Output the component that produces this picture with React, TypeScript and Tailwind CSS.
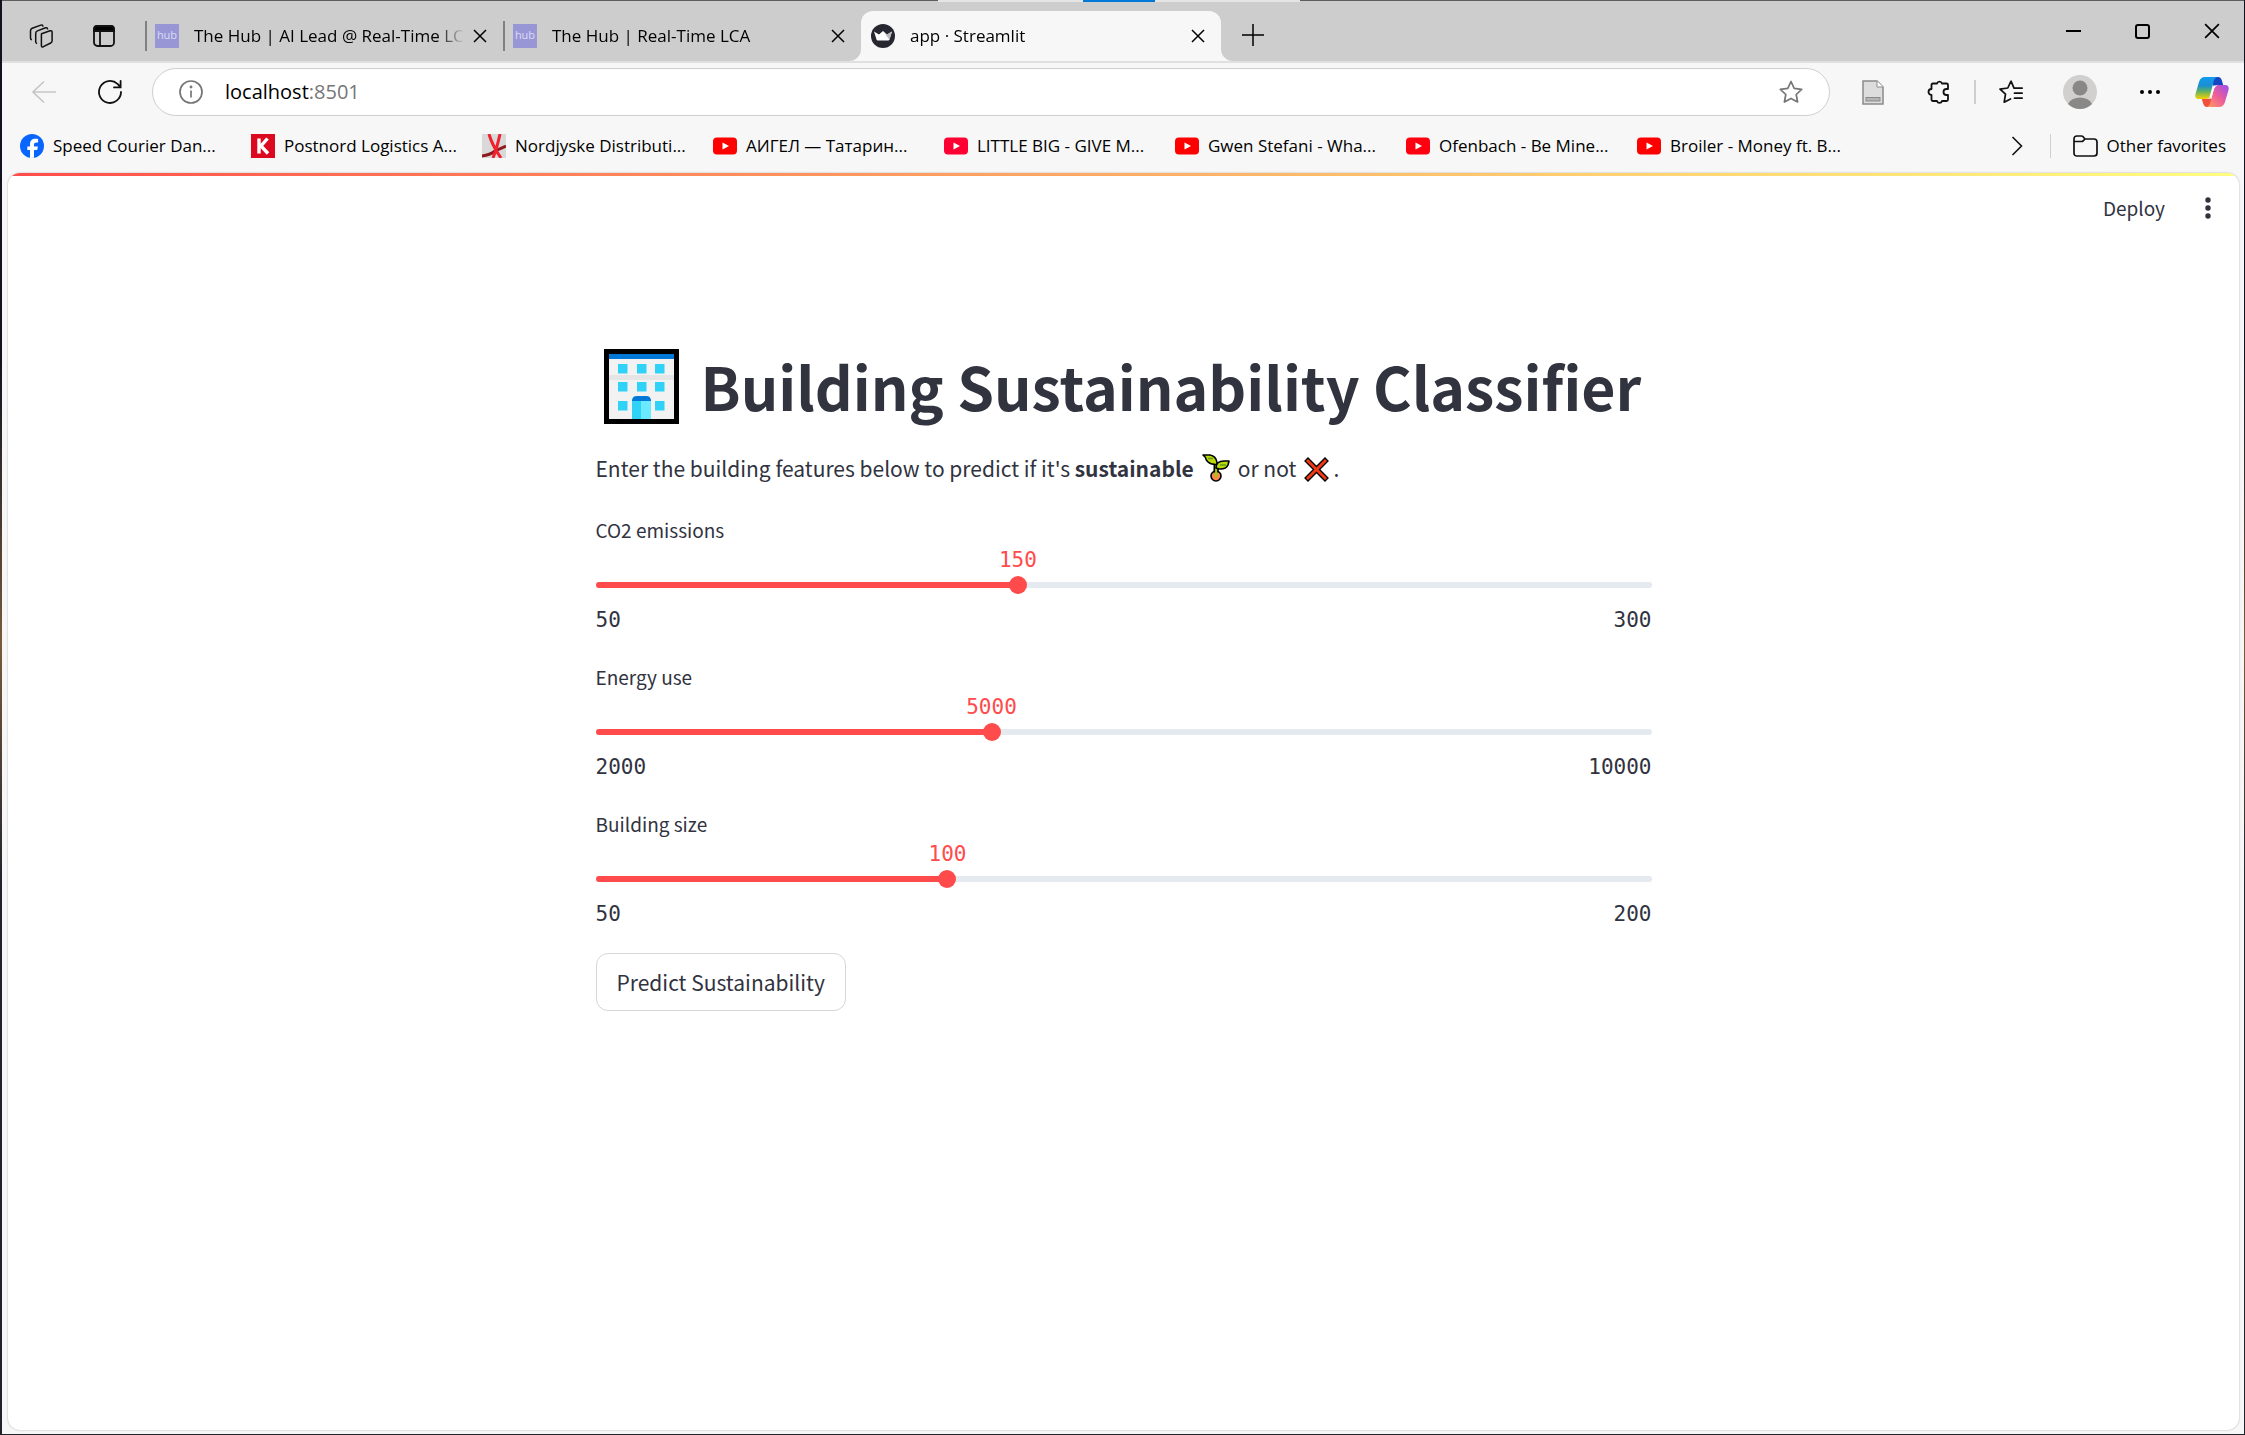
import React, { useState } from "react";

const ui = "font-['Open_Sans','Noto_Sans',sans-serif]";
const page = "font-['Noto_Sans_CJK_SC','Noto_Sans',sans-serif]";

function CloseIcon({ size = 14 }: { size?: number }) {
  return (
    <svg width={size} height={size} viewBox="0 0 14 14" stroke="#000" strokeWidth="1.5" fill="none">
      <path d="M1 1l12 12M13 1L1 13" />
    </svg>
  );
}

function HubIcon() {
  return (
    <span className="flex size-6 shrink-0 items-center justify-center bg-[#9996d6] pb-1 text-[11px] leading-none text-[#dcdbf5]">hub</span>
  );
}

function StreamlitIcon() {
  return (
    <svg className="shrink-0" width="24" height="24" viewBox="0 0 24 24">
      <circle cx="12" cy="12" r="12" fill="#262730" />
      <path d="M3 7.5l5 3 4-3.5 4 3.5 5-3-2.6 8.2q-.3.8-1.2.8H6.8q-.9 0-1.2-.8z" fill="#fff" />
      <path d="M12 7l4 3.5 5-3-2.6 8.2z" fill="#b9b9be" />
    </svg>
  );
}

function Tab({ title, icon, active = false }: { title: string; icon: React.ReactNode; active?: boolean }) {
  return (
    <div className={active ? "relative flex h-full w-[360px] items-center rounded-t-xl bg-[#f7f7f7] pr-[13px] pl-2.5" : "relative flex h-full w-[358px] items-center pr-[13px] pl-2.5"}>
      {active ? (
        <>
          <svg className="absolute bottom-0 -left-3" width="12" height="12" viewBox="0 0 12 12"><path d="M12 0v12H0A12 12 0 0 0 12 0z" fill="#f7f7f7" /></svg>
          <svg className="absolute -right-3 bottom-0" width="12" height="12" viewBox="0 0 12 12"><path d="M0 0v12h12A12 12 0 0 1 0 0z" fill="#f7f7f7" /></svg>
        </>
      ) : (
        <span className="absolute left-0 h-[30px] w-0.5 bg-[#808080]" />
      )}
      {icon}
      <span className="ml-[15px] flex-1 overflow-hidden text-[17px] leading-6 whitespace-nowrap [mask-image:linear-gradient(to_right,#000_90%,transparent)]">{title}</span>
      <button aria-label={"Close " + title} className="ml-1.5 flex h-6 w-5 items-center justify-center"><CloseIcon /></button>
    </div>
  );
}

function YouTube({ color }: { color: string }) {
  return (
    <svg className="shrink-0" width="24" height="24" viewBox="0 0 24 24">
      <rect y="3.5" width="24" height="17" rx="4" fill={color} />
      <path d="M9.5 8.5v7l6.500-3.500z" fill="#fff" />
    </svg>
  );
}

const facebook = (
  <svg className="shrink-0" width="24" height="24" viewBox="0 0 24 24">
    <circle cx="12" cy="12" r="12" fill="#0866ff" />
    <path d="M10 24v-8H7.300v-3.600H10v-1.800c0-4 1.800-5.800 5.600-5.800.8 0 1.900.1 2.500.3v3.300h-1.500c-1.900 0-2.600.7-2.600 2.500v1.500h3.900l-.7 3.600H14v7.800z" fill="#fff" />
  </svg>
);
const krak = (
  <svg className="shrink-0" width="24" height="24" viewBox="0 0 24 24">
    <rect width="24" height="24" fill="#dc0a20" />
    <path d="M8 4.500v15M16.500 4.500L10 12l7 7.500" stroke="#fff" strokeWidth="3.400" fill="none" />
  </svg>
);
const nord = (
  <svg className="shrink-0" width="24" height="24" viewBox="0 0 24 24">
    <rect width="24" height="24" fill="#d9d9d9" />
    <path d="M0 22q8-1 13-5l11-5" stroke="#8e1a20" strokeWidth="3" fill="none" />
    <path d="M7 0q3 11 12 24M18 0q-3 14-7 24" stroke="#f0202c" strokeWidth="3" fill="none" />
  </svg>
);

const bookmarks: [string, React.ReactNode][] = [
  ["Speed Courier Dan...", facebook],
  ["Postnord Logistics A...", krak],
  ["Nordjyske Distributi...", nord],
  ["АИГЕЛ — Татарин...", <YouTube color="#ff0000" />],
  ["LITTLE BIG - GIVE M...", <YouTube color="#ff0033" />],
  ["Gwen Stefani - Wha...", <YouTube color="#ff0000" />],
  ["Ofenbach - Be Mine...", <YouTube color="#ff0010" />],
  ["Broiler - Money ft. B...", <YouTube color="#ff0000" />],
];

function TitleBar() {
  return (
    <header className="relative flex h-[61px] items-stretch border-t border-[#5f5d5d] bg-[#cdcdcd]">
      <div className="absolute -top-px left-[936px] flex h-0.5 w-[362px] justify-center bg-[#e5e5e5]"><span className="w-[72px] bg-[#0078d7]" /></div>
      <div className="flex w-[143px] items-center gap-10 pt-2.5 pl-[27px]">
        <button aria-label="Workspaces">
          <svg width="24" height="24" viewBox="0 0 24 24" fill="none" stroke="#111" strokeWidth="1.5" strokeLinejoin="round">
            <path d="M12.500 9.800l8.600-3q2-.6 2 1.400v8.600q0 1.600-1.400 2.200l-7.300 3.700q-2 .9-2-1.200V12q0-1.700.1-2.200z" />
            <path d="M18.500 5.600V5q0-1.800-1.900-1.200L8.400 6.900Q6.700 7.600 6.700 9.300v8.500q0 1.400 1.400 1.800M14 2.600q-.2-2.200-2.200-1.500L3.200 4.300Q1.500 5 1.500 6.700v7.500q0 1.300 1.400 1.700" />
          </svg>
        </button>
        <button aria-label="Tab actions">
          <svg width="22" height="22" viewBox="0 0 22 22" fill="none" stroke="#111" strokeWidth="1.8">
            <rect x="1" y="1" width="20" height="20" rx="3.5" />
            <path d="M1 6V4q0-3 3-3h14q3 0 3 3v2z" fill="#000" />
            <path d="M7 7v14" />
          </svg>
        </button>
      </div>
      <nav className="flex pt-2.5">
        <Tab title="The Hub | AI Lead @ Real-Time LCA" icon={<HubIcon />} />
        <Tab title="The Hub | Real-Time LCA" icon={<HubIcon />} />
        <Tab title="app · Streamlit" icon={<StreamlitIcon />} active />
      </nav>
      <button aria-label="New tab" className="ml-[21px] pt-2">
        <svg width="22" height="22" viewBox="0 0 22 22" stroke="#000" strokeWidth="1.5"><path d="M11 0v22M0 11h22" /></svg>
      </button>
      <div className="-mr-0.5 ml-auto flex h-[60px]">
        <button aria-label="Minimize" className="flex w-[69px] items-center justify-center"><svg width="15" height="15" viewBox="0 0 15 15"><path d="M0 7h15" stroke="#000" strokeWidth="2" /></svg></button>
        <button aria-label="Maximize" className="flex w-[69px] items-center justify-center"><svg width="15" height="15" viewBox="0 0 15 15"><rect x="1" y="1" width="13" height="13" rx="2" fill="none" stroke="#000" strokeWidth="2" /></svg></button>
        <button aria-label="Close window" className="flex w-[69px] items-center justify-center"><CloseIcon size={16} /></button>
      </div>
    </header>
  );
}

const star = "M12 1.500l3.200 6.900 7.500.9-5.500 5.200 1.400 7.500L12 18.400 5.400 22l1.400-7.500L1.300 9.300l7.500-.9z";

function Toolbar() {
  return (
    <div className="flex h-[60px] items-center border-t-2 border-[#e0e0e0] bg-[#f7f7f7] pr-[15px] pl-[30px]">
      <button aria-label="Back">
        <svg width="24" height="24" viewBox="0 0 24 24" fill="none" stroke="#c6c6c6" strokeWidth="1.6"><path d="M24 12H1M12 1.500L1 12l11 10.500" /></svg>
      </button>
      <button aria-label="Refresh" className="ml-[42px]">
        <svg width="24" height="24" viewBox="0 0 24 24" fill="none" stroke="#111" strokeWidth="1.8" strokeLinecap="round"><path d="M23 12a11 11 0 1 1-3.500-8.100L22.500 7M22.600.9V7.400H16" /></svg>
      </button>
      <label className="ml-[30px] flex h-12 flex-1 items-center rounded-full border border-[#cfcfcf] bg-white px-[26px]">
        <svg width="24" height="24" viewBox="0 0 24 24" fill="none" stroke="#767676" strokeWidth="1.7"><circle cx="12" cy="12" r="11" /><path d="M12 10.500v7" /><circle cx="12" cy="7" r=".6" fill="#767676" /></svg>
        <span className="relative ml-[22px] flex-1 text-[20px] leading-7">
          <span aria-hidden="true"><span className="text-black">localhost</span><span className="text-[#767676]">:8501</span></span>
          <input aria-label="Address" defaultValue="localhost:8501" className="absolute inset-0 w-full text-transparent outline-none" />
        </span>
        <button aria-label="Add to favorites"><svg width="24" height="24" viewBox="0 0 24 24" fill="none" stroke="#767676" strokeWidth="1.7" strokeLinejoin="round"><path d={star} /></svg></button>
      </label>
      <button aria-label="Page extension" className="ml-8">
        <svg width="22" height="25" viewBox="0 0 22 25"><path d="M1 1h14l6 6v17H1z" fill="#ddd" stroke="#8a8a8a" strokeWidth="1.5" /><path d="M15 1v6h6" fill="#fff" stroke="#8a8a8a" /><rect x="4" y="17.5" width="14" height="3.5" fill="#b4b4b4" stroke="#8a8a8a" /></svg>
      </button>
      <button aria-label="Extensions" className="ml-[43px]">
        <svg width="24" height="24" viewBox="0 0 24 24" fill="none" stroke="#111" strokeWidth="1.8" strokeLinejoin="round"><path d="M6 3.500h4a2.600 2.600 0 0 1 5 0h4.500q1.500 0 1.500 1.500v4h-1.500a3 3 0 0 0 0 6H21v4.500q0 1.500-1.500 1.500H15a2.600 2.600 0 0 1-5 0H6q-1.500 0-1.500-1.500V15a3 3 0 0 1 0-6V5q0-1.500 1.500-1.500z" /></svg>
      </button>
      <span className="ml-[23px] h-6 w-0.5 bg-[#cfcfcf]" />
      <button aria-label="Favorites" className="ml-[23px]">
        <svg width="24" height="24" viewBox="0 0 24 24" fill="none" stroke="#111" strokeWidth="1.7" strokeLinecap="round" strokeLinejoin="round"><path d="M23.200 8.200H15L12 1.200 8.800 8 1 9.200l5.500 5-1.300 8L11.500 19M15.500 13.200h7.700M15.500 18.200h7.700" /></svg>
      </button>
      <button aria-label="Profile" className="ml-10">
        <svg width="34" height="34" viewBox="0 0 34 34"><circle cx="17" cy="17" r="17" fill="#d2d0ce" /><circle cx="17" cy="13" r="7.5" fill="#8a8886" /><path d="M5 29a12.500 9 0 0 1 24 0 17 17 0 0 1-24 0z" fill="#8a8886" /></svg>
      </button>
      <button aria-label="Settings and more" className="ml-[42px]">
        <svg width="22" height="6" viewBox="0 0 22 6"><circle cx="3" cy="3" r="2" /><circle cx="11" cy="3" r="2" /><circle cx="19" cy="3" r="2" /></svg>
      </button>
      <button aria-label="Copilot" className="ml-[34px]">
        <svg width="34" height="34" viewBox="0 0 34 34">
          <defs>
            <linearGradient id="cpA" x1="0" y1="0" x2="0" y2="1"><stop offset="0" stopColor="#0f9bf2" /><stop offset=".4" stopColor="#1b8fd0" /><stop offset=".65" stopColor="#5fb260" /><stop offset="1" stopColor="#f8d200" /></linearGradient>
            <linearGradient id="cpB" x1="1" y1="0" x2="0" y2="1"><stop offset="0" stopColor="#9a4ef0" /><stop offset=".5" stopColor="#ee5e97" /><stop offset="1" stopColor="#ffa25a" /></linearGradient>
          </defs>
          <path d="M16 2h7q3 0 4 4l1.200 4H23q-3 0-4 3.500z" fill="#1546c4" />
          <path d="M18 32h-6q-3 0-4-4l-1.200-4H11q3 0 4-3.500z" fill="#f0503c" />
          <path d="M10 2h13q-3 0-4.200 4L15 20.500q-1 3.500-4 3.500H4q-4.500 0-3.500-5L4 7q1.500-5 6-5z" fill="url(#cpA)" />
          <path d="M24 32H11q3 0 4.200-4L19 13.500q1-3.500 4-3.500h7q4.500 0 3.500 5L30 27q-1.500 5-6 5z" fill="url(#cpB)" />
          <path d="M18.500 10.500h4q-2.500.5-3.500 3.500l-2.500 8.500q-1 1.500-4 1.500 2-.5 3-4z" fill="#fff" />
        </svg>
      </button>
    </div>
  );
}

function Bookmarks() {
  return (
    <div className="flex h-[52px] items-center bg-[#f7f7f7] px-[18px] pb-0.5 text-[17px] leading-6">
      {bookmarks.map(([name, icon]) => (
        <a key={name} href="#" className="flex w-[231px] items-center gap-[9px] whitespace-nowrap">{icon}{name}</a>
      ))}
      <button aria-label="More favorites" className="ml-auto"><svg width="12" height="20" viewBox="0 0 12 20" fill="none" stroke="#111" strokeWidth="1.6"><path d="M1.500 1L10.500 10l-9 9" /></svg></button>
      <span className="ml-[27px] h-6 w-px bg-[#cfcfcf]" />
      <a href="#" className="ml-[22px] flex items-center gap-[9px] whitespace-nowrap">
        <svg width="25" height="22" viewBox="0 0 25 22" fill="none" stroke="#111" strokeWidth="1.7" strokeLinejoin="round"><path d="M1 6.500V4q0-3 3-3h4.500q1 0 1.600.7L12 4h9q3 0 3 3v11q0 3-3 3H4q-3 0-3-3zM1 6.500h7.500q1 0 1.600-.6L12 4" /></svg>
        Other favorites
      </a>
    </div>
  );
}

function Building() {
  return (
    <svg className="shrink-0" width="75" height="75" viewBox="0 0 75 75">
      <rect width="75" height="75" fill="#000" />
      <rect x="5" y="5" width="65" height="65" fill="#f2f2f2" />
      <rect x="5" y="5" width="65" height="5" fill="#0078d7" />
      <rect x="5" y="26" width="65" height="5" fill="#e5e5e5" />
      {[14, 33, 51].map((x) => [15, 33, 52].map((y) => <rect key={x + "-" + y} x={x} y={y} width="9.5" height="9.5" fill="#31d2f7" />))}
      <rect x="28" y="51" width="9" height="19" fill="#31d2f7" />
      <rect x="37" y="51" width="10" height="19" fill="#6aeaff" />
      <path d="M28 52q0-5 5-5h9q5 0 5 5z" fill="#0078d7" />
    </svg>
  );
}

function Seedling() {
  return (
    <svg className="mx-2 inline-block align-[-5px]" width="28" height="28" viewBox="0 0 28 28" stroke="#000" strokeWidth="1.6" strokeLinejoin="round">
      <circle cx="14" cy="22" r="5" fill="#f7894a" />
      <path d="M12.700 9.500v13h2.800v-8h-1z" fill="#9ccc12" stroke="none" />
      <path d="M12.300 9.500v9M16 13.500v5" />
      <path d="M1 1h7q6 1 7 7.500v2q-6 .5-9.500-3-1.800-2-2-4z" fill="#bad80a" />
      <path d="M14 14q0-7 8-7h5l-1 4q-2 4.500-9 4z" fill="#bad80a" />
      <path d="M6 4.500h5M18 11h6" stroke="#5f9b1c" />
    </svg>
  );
}

function Cross() {
  return (
    <svg className="mr-1 ml-2 inline-block align-[-5px]" width="25" height="25" viewBox="0 0 25 25">
      <path d="M4 1l8.500 8.500L21 1l3 3-8.500 8.500L24 21l-3 3-8.500-8.500L4 24l-3-3 8.500-8.500L1 4z" fill="#f03a17" stroke="#000" strokeWidth="1.3" />
    </svg>
  );
}

function Slider({ label, min, max, initial }: { label: string; min: number; max: number; initial: number }) {
  const [value, setValue] = useState(initial);
  const id = label.toLowerCase().replace(/ /g, "-");
  const pct = ((value - min) / (max - min)) * 100 + "%";
  return (
    <div className="flex h-[123px] flex-col">
      <label htmlFor={id} className="text-[19px] leading-8">{label}</label>
      <div className="relative mt-[30px] flex h-[18px] items-center">
        <output htmlFor={id} style={{ left: pct }} className="absolute bottom-[18px] -translate-x-1/2 font-['DejaVu_Sans_Mono',monospace] text-[21px] leading-8 text-[#ff4b4b]">{value}</output>
        <div className="h-1.5 w-full overflow-hidden rounded-full bg-[#e5e9f0]">
          <div style={{ width: pct }} className="h-full bg-[#ff4b4b]" />
        </div>
        <input
          id={id}
          type="range"
          min={min}
          max={max}
          value={value}
          onChange={(e) => setValue(Number(e.target.value))}
          className="absolute -left-[9px] h-[18px] w-[calc(100%+18px)] appearance-none bg-transparent [&::-webkit-slider-thumb]:size-[18px] [&::-webkit-slider-thumb]:appearance-none [&::-webkit-slider-thumb]:rounded-full [&::-webkit-slider-thumb]:bg-[#ff4b4b]"
        />
      </div>
      <div className="mt-2.5 flex justify-between font-['DejaVu_Sans_Mono',monospace] text-[21px] leading-8">
        <span>{min}</span>
        <span>{max}</span>
      </div>
    </div>
  );
}

export default function App() {
  return (
    <div className={`${ui} flex min-h-screen bg-linear-to-b from-[#10131f] from-25% via-[#7a5a3a] via-45% to-[#20222c] to-62% pr-px pb-px pl-0.5 text-black`}>
      <div className="flex min-w-0 flex-1 flex-col bg-[#f7f7f7]">
        <TitleBar />
        <Toolbar />
        <Bookmarks />
        <div className="flex flex-1 pr-[5px] pb-1 pl-1.5">
          <main className={`${page} flex flex-1 flex-col overflow-hidden rounded-xl bg-white text-[#31333f] shadow-[0_0_2px_rgba(0,0,0,0.3)]`}>
            <div className="h-[3px] bg-linear-to-r from-[#ff4b4b] to-[#fffd80]" />
            <div className="flex h-16 items-center justify-end gap-9 pr-6">
              <button className="text-[19px] leading-8">Deploy</button>
              <button aria-label="Main menu" className="px-1">
                <svg width="6" height="22" viewBox="0 0 6 22" fill="#31333f"><circle cx="3" cy="3" r="2.7" /><circle cx="3" cy="11" r="2.7" /><circle cx="3" cy="19" r="2.7" /></svg>
              </button>
            </div>
            <div className="mx-auto flex w-[1056px] max-w-full flex-col pt-[106px]">
              <h1 className="flex items-center gap-[22px] pl-2 text-[59px] leading-[80px] font-bold whitespace-nowrap"><Building />Building Sustainability Classifier</h1>
              <p className="mt-6 text-[21px] leading-9">
                Enter the building features below to predict if it's <strong className="font-bold">sustainable</strong>
                <Seedling />or not<Cross />.
              </p>
              <div className="mt-7 flex flex-col gap-6">
                <Slider label="CO2 emissions" min={50} max={300} initial={150} />
                <Slider label="Energy use" min={2000} max={10000} initial={5000} />
                <Slider label="Building size" min={50} max={200} initial={100} />
              </div>
              <button className="mt-[22px] h-[58px] self-start rounded-xl border border-[#d6d6d9] bg-white px-5 text-[21px] leading-9">Predict Sustainability</button>
            </div>
          </main>
        </div>
      </div>
    </div>
  );
}
